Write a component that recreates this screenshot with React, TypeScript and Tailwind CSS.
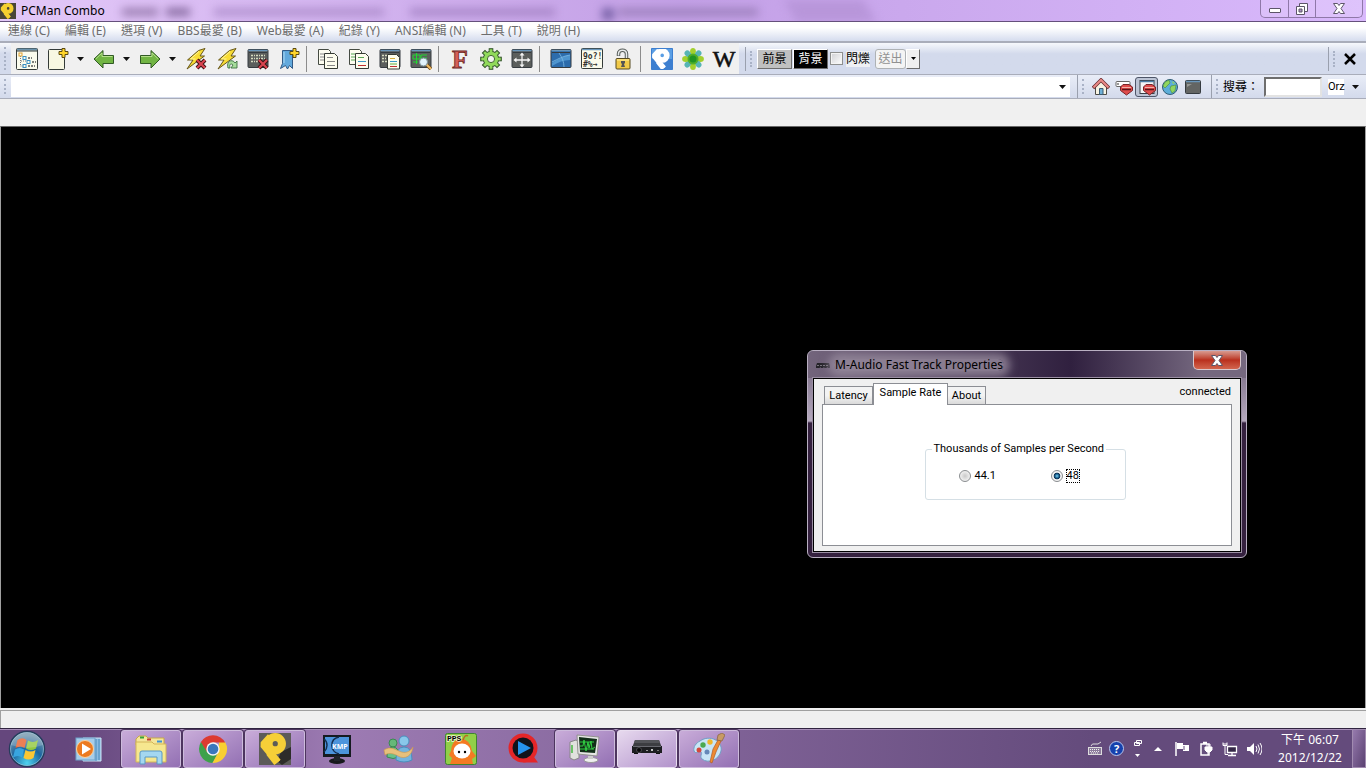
import { useState } from "react";
import type { ReactNode } from "react";

const menus = [
  "連線 (C)",
  "編輯 (E)",
  "選項 (V)",
  "BBS最愛 (B)",
  "Web最愛 (A)",
  "紀錄 (Y)",
  "ANSI編輯 (N)",
  "工具 (T)",
  "說明 (H)",
];

function Svg({ children, className = "h-[22px] w-[22px]", box = "0 0 22 22" }: { children: ReactNode; className?: string; box?: string }) {
  return (
    <svg viewBox={box} className={className} aria-hidden="true">
      {children}
    </svg>
  );
}

function Caret() {
  return (
    <svg viewBox="0 0 7 4" className="h-1 w-[7px]" aria-hidden="true">
      <path d="M0 0h7L3.5 4z" fill="#111" />
    </svg>
  );
}

function Grip() {
  return (
    <span className="flex w-[11px] shrink-0 justify-center self-stretch py-1">
      <span className="w-[3px] border-l-2 border-dotted border-[#a9b2c6]" />
    </span>
  );
}

/* thick folded ribbon: ring on top, tail to the lower right */
function RibbonLogo({ color }: { color: string }) {
  return (
    <g fill="none" stroke={color} strokeLinejoin="round">
      <circle cx="11.2" cy="7.4" r="4.6" strokeWidth="5.6" />
      <path d="M8 2.5L3 8L13 20" strokeWidth="5" strokeLinejoin="bevel" />
      <path d="M7 13.5L12.5 20.500" strokeWidth="5" />
    </g>
  );
}

/* pieces shared by several toolbar icons */
const Screen = ({ fill = "#5b5e5c" }: { fill?: string }) => (
  <g>
    <rect x="1" y="1.5" width="20" height="18" rx="1" fill={fill} stroke="#353b40" />
    <path d="M1.5 2.5h19" stroke="#6996bb" strokeWidth="1.5" />
    <path d="M2 4.5h18" stroke="#353b40" />
  </g>
);

const RedX = () => (
  <g>
    <path d="M12 12l8 8M20 12l-8 8" stroke="#3a1010" strokeWidth="4" />
    <path d="M12 12l8 8M20 12l-8 8" stroke="#d94550" strokeWidth="2.2" />
  </g>
);

const Plus = () => <path d="M15 .5h3v3h3v3h-3v3h-3v-3h-3v-3h3z" fill="#ffd52a" stroke="#5b4a10" />;

const Bolt = () => (
  <g>
    <path d="M13.500 2.500L20 .5l-5 7.500h4.500L2 21l6-9H2.500z" fill="#f8dc35" stroke="#665618" />
    <path d="M14 3.500L5.500 11h5" stroke="#fff59a" fill="none" />
  </g>
);

const TreeIcon = (
  <Svg>
    <rect x=".5" y=".5" width="21" height="21" rx="1" fill="#fbfced" stroke="#343b38" />
    <path d="M1 1.5h20" stroke="#6b93ad" strokeWidth="2" />
    <path d="M1 3h20" stroke="#343b38" />
    <path d="M4.5 8v10h3M5 13h6" stroke="#777" fill="none" strokeDasharray="1 1" />
    <rect x="3" y="5" width="3" height="3" fill="none" stroke="#e0a030" />
    <g fill="none" stroke="#3a8fc4">
      <rect x="7" y="8.5" width="3" height="3" />
      <rect x="11" y="12.5" width="3" height="3" />
      <rect x="7" y="16.5" width="3" height="3" />
    </g>
    <path d="M12 10h4M16 14h4M12 18h7" stroke="#555" strokeWidth="1.5" strokeDasharray="2 1" />
  </Svg>
);

const NewIcon = (
  <Svg>
    <rect x="1.5" y="1.5" width="16" height="20" rx="1" fill="#f8f8e2" stroke="#343b38" />
    <Plus />
  </Svg>
);

const BackIcon = (
  <Svg>
    <path d="M1 11l9-8.5v5h10.5v8H10v4.5z" fill="#72b544" stroke="#315a25" />
    <path d="M3 10.7L9 5v3.5h10.5" stroke="#b6df8c" fill="none" />
  </Svg>
);

const ForwardIcon = (
  <Svg>
    <path d="M21 11l-9-8.5v5H1.5v8H12v4.5z" fill="#72b544" stroke="#315a25" />
    <path d="M2 8.5h11V5l6 5.7" stroke="#b6df8c" fill="none" />
  </Svg>
);

const BoltXIcon = (
  <Svg>
    <Bolt />
    <RedX />
  </Svg>
);

const BoltRefreshIcon = (
  <Svg>
    <Bolt />
    <path d="M12 20c-2-8 5-9 7-5l2-2v7h-6l2-3c-2-2-4-1-3 3z" fill="#a6dd9c" stroke="#3c7040" strokeWidth=".9" />
  </Svg>
);

const TermXIcon = (
  <Svg>
    <Screen />
    <path d="M4 7.5h14M4 10.5h14M4 13.5h10" stroke="#d6dcc0" strokeWidth="1.5" strokeDasharray="2 1 1 1" />
    <RedX />
  </Svg>
);

const BookmarkIcon = (
  <Svg>
    <path d="M4.5 2.5h10v18l-3-3-2 3.5-2-3.5-5 3 2-5z" fill="#62a9dc" stroke="#315a86" />
    <path d="M6 4v11" stroke="#b0dcf5" />
    <Plus />
  </Svg>
);

function CopyIcon({ colors }: { colors: [string, string, string] }) {
  return (
    <Svg>
      <path d="M1.5 1.5h10l2 2v13h-12z" fill="#fdfdf0" stroke="#454b42" />
      <path d="M3 6h4M3 9h4M3 12h4" stroke={colors[0]} />
      <path d="M7.5 5.5h10l3 3v12h-13z" fill="#fdfdee" stroke="#353b34" />
      <path d="M10 9.5h6" stroke={colors[0]} />
      <path d="M10 13.5h8" stroke={colors[1]} />
      <path d="M10 17.5h8" stroke={colors[2]} />
    </Svg>
  );
}

const TermCopyIcon = (
  <Svg>
    <Screen />
    <path d="M3 7.5h5M3 10.5h4M3 13.5h5" stroke="#d6dcc0" strokeDasharray="2 1" strokeWidth="1.5" />
    <path d="M8.5 6.5h9l3 3v11.5h-12z" fill="#fdfdee" stroke="#353b34" />
    <path d="M11 10.5h5" stroke="#d5b040" />
    <path d="M11 13.5h7" stroke="#3d9ac8" />
    <path d="M11 16h7" stroke="#65b045" />
    <path d="M11 18.5h7" stroke="#c03030" />
  </Svg>
);

const TermFindIcon = (
  <Svg>
    <Screen />
    <path d="M3 7h7v4H3zM6.500 5v11M11 7h6M12 10h5M11 7v7M3 14h5" stroke="#20d830" fill="none" />
    <path d="M16 16l5 5" stroke="#6d4818" strokeWidth="3.500" />
    <path d="M16 16l5 5" stroke="#f1bb62" strokeWidth="2" />
    <circle cx="13.5" cy="14" r="4" fill="#e1f2fb" stroke="#80949b" />
  </Svg>
);

const FontIcon = (
  <Svg className="h-[30px] w-[22px] shrink-0" box="0 0 22 30">
    <text x="3" y="23.500" fontFamily="Liberation Serif, serif" fontWeight="700" fontSize="26" fill="#d66055" stroke="#6b2723" strokeWidth=".8">
      F
    </text>
  </Svg>
);

const GearIcon = (
  <Svg>
    {[0, 45, 90, 135, 180, 225, 270, 315].map((angle) => (
      <rect key={angle} x="9.2" y=".7" width="3.6" height="5" fill="#8bd552" stroke="#35552e" transform={`rotate(${angle} 11 11)`} />
    ))}
    <circle cx="11" cy="11" r="7.7" fill="#91da5b" stroke="#35552e" />
    {[0, 45, 90, 135, 180, 225, 270, 315].map((angle) => (
      <rect key={angle} x="9.7" y="2" width="2.6" height="3" fill="#91da5b" transform={`rotate(${angle} 11 11)`} />
    ))}
    <circle cx="11" cy="11" r="3.6" fill="#f2f4ef" stroke="#456934" />
  </Svg>
);

const MoveIcon = (
  <Svg>
    <Screen />
    <path d="M11 6v12M4 12h14" stroke="#f5f5f5" strokeWidth="1.3" />
    <path d="M11 4.500l2.500 3h-5zM11 19.500l2.500-3h-5zM2.500 12l3-2.500v5zM19.500 12l-3-2.500v5z" fill="#f5f5f5" />
  </Svg>
);

const MapIcon = (
  <Svg>
    <Screen fill="#2c6cac" />
    <path d="M2 15c6-4 12-7 18-8v5C14 12 8 14 2 18z" fill="#4e95cf" />
    <path d="M2 14c6-3 11-6 18-7M9 5c3 4 5 9 5 14" stroke="#7dbbe5" fill="none" strokeWidth=".8" />
  </Svg>
);

const SymbolIcon = (
  <Svg>
    <rect x=".5" y=".5" width="21" height="20" rx="1" fill="#fbfbec" stroke="#343b38" />
    <path d="M1 1.5h20" stroke="#6996bb" strokeWidth="1.5" />
    <text x="2" y="11" fontFamily="DejaVu Sans Mono, monospace" fontWeight="700" fontSize="8" fill="#333">
      9o?!
    </text>
    <text x="2" y="19" fontFamily="DejaVu Sans Mono, monospace" fontWeight="700" fontSize="8" fill="#333">
      #%→
    </text>
  </Svg>
);

const LockIcon = (
  <Svg>
    <path d="M6.500 8V6c0-5 8-5 8 0v5" stroke="#555b58" strokeWidth="3.500" fill="none" />
    <path d="M6.500 7.500V6c0-5 8-5 8 0v5" stroke="#e7eaea" strokeWidth="1.500" fill="none" />
    <rect x="4" y="10.5" width="14" height="10.5" rx="1" fill="#f2ca48" stroke="#574a20" />
    <path d="M5 12h12" stroke="#fff0a0" />
    <path d="M9 13h4v2l-1 1 1 3H9l1-3-1-1z" fill="#555" />
  </Svg>
);

const BlueLogoIcon = (
  <Svg>
    <rect width="22" height="22" rx="1" fill="#3d7fd0" />
    <rect x="1" y="1" width="20" height="10" fill="#5a9ee4" />
    <RibbonLogo color="#fff" />
    <rect x=".5" y=".5" width="21" height="21" rx="1" fill="none" stroke="#3d7fd0" />
  </Svg>
);

const FlowerIcon = (
  <Svg>
    {[0, 45, 90, 135, 180, 225, 270, 315].map((angle) => (
      <ellipse key={angle} cx="11" cy="3.6" rx="2.9" ry="3.500" fill={angle % 90 ? "#57b5b4" : "#a3d02e"} transform={`rotate(${angle} 11 11)`} />
    ))}
    <circle cx="11" cy="11" r="5.5" fill="#4fae2b" />
    <circle cx="11" cy="11" r="3.5" fill="#1f9424" />
  </Svg>
);

const WikiIcon = (
  <Svg className="h-7 w-6 shrink-0" box="0 0 24 28">
    <text x="12" y="22" textAnchor="middle" fontFamily="Liberation Serif, serif" fontSize="24" fill="#111" stroke="#111" strokeWidth=".6">
      W
    </text>
  </Svg>
);

type Tool = { name: string; icon?: ReactNode; drop?: boolean };

const tools: Tool[] = [
  { name: "Site list", icon: TreeIcon },
  { name: "New", icon: NewIcon, drop: true },
  { name: "Back", icon: BackIcon, drop: true },
  { name: "Forward", icon: ForwardIcon, drop: true },
  { name: "Disconnect", icon: BoltXIcon },
  { name: "Reconnect", icon: BoltRefreshIcon },
  { name: "Close page", icon: TermXIcon },
  { name: "Add bookmark", icon: BookmarkIcon },
  { name: "-" },
  { name: "Copy", icon: <CopyIcon colors={["#888", "#888", "#888"]} /> },
  { name: "Copy with color", icon: <CopyIcon colors={["#58a855", "#3d9ac8", "#c03030"]} /> },
  { name: "Copy screen", icon: TermCopyIcon },
  { name: "Find", icon: TermFindIcon },
  { name: "-" },
  { name: "Font", icon: FontIcon },
  { name: "Settings", icon: GearIcon },
  { name: "Full screen", icon: MoveIcon },
  { name: "-" },
  { name: "Background", icon: MapIcon },
  { name: "Symbols", icon: SymbolIcon },
  { name: "Lock", icon: LockIcon },
  { name: "-" },
  { name: "PCMan", icon: BlueLogoIcon },
  { name: "ICQ", icon: FlowerIcon },
  { name: "Wikipedia", icon: WikiIcon },
];

function ToolButton({ tool }: { tool: Tool }) {
  if (tool.name === "-") {
    return <span className="mr-[5px] ml-0.5 h-[26px] w-px bg-[#8c8c8c]" />;
  }
  return (
    <>
      <button aria-label={tool.name} className="flex h-7 w-[31px] items-center justify-center">
        {tool.icon}
      </button>
      {tool.drop && (
        <button aria-label={`${tool.name} menu`} className="flex h-7 w-[15px] items-center justify-center">
          <Caret />
        </button>
      )}
    </>
  );
}

function TitleBar() {
  return (
    <header className="relative flex h-[22px] shrink-0 items-center overflow-hidden border-b border-[#65507c] bg-linear-to-r from-[#e3c8f8] via-[#c3a0e6] to-[#d9b9fc]">
      <div className="absolute inset-0 blur-[4px]">
        <span className="absolute top-2 left-[122px] h-2 w-9 bg-[#8d71a4]/80" />
        <span className="absolute top-2 left-[166px] h-2 w-6 bg-[#75598f]/80" />
        <span className="absolute top-2 left-[214px] h-2 w-[170px] bg-[#9c7bbd]/60" />
        <span className="absolute top-2 left-[410px] h-2 w-[145px] bg-[#9c7bbd]/70" />
        <span className="absolute top-2 left-[602px] h-3 w-3 bg-[#665299]/80" />
        <span className="absolute top-2 left-[618px] h-2 w-[140px] bg-[#967ab5]/80" />
        <span className="absolute top-0 left-[790px] h-[22px] w-[80px] skew-x-[30deg] bg-[#b896da]" />
      </div>
      <Svg className="relative h-4 w-4">
        <rect width="22" height="22" fill="#4a4537" />
        <RibbonLogo color="#f5cf30" />
      </Svg>
      <h1 className="relative ml-[5px] text-[12px] leading-5 text-black">PCMan Combo</h1>
      <div className="relative mr-[3px] ml-auto flex h-[18px] self-start rounded-b-[5px] border border-t-0 border-[#8f78a8] bg-white/15">
        <button aria-label="Minimize" className="flex w-7 items-center justify-center border-r border-[#8f78a8]">
          <span className="mt-1 h-[5px] w-3 rounded-[1px] border border-[#5c5568] bg-white" />
        </button>
        <button aria-label="Restore" className="flex w-[27px] items-center justify-center border-r border-[#8f78a8]">
          <Svg className="h-3 w-3" box="0 0 12 12">
            <path d="M3.5.5h8v8h-8z" fill="#fff" stroke="#5c5568" />
            <path d="M.5 3.5h8v8h-8z" fill="#fff" stroke="#5c5568" />
            <path d="M3 6h3v3H3z" fill="#a991bd" stroke="#5c5568" />
          </Svg>
        </button>
        <button aria-label="Close" className="flex w-[46px] items-center justify-center">
          <CloseMark />
        </button>
      </div>
    </header>
  );
}

function CloseMark() {
  return (
    <Svg className="h-[11px] w-3" box="0 0 12 11">
      <path d="M.5.5h4L6 2.5 7.5.5h4L8 5.5l3.5 5h-4L6 8.5l-1.5 2h-4l3.5-5z" fill="#fff" stroke="#5c5568" />
    </Svg>
  );
}

function AnsiBar() {
  return (
    <div className="flex flex-1 items-center border-l border-[#9aa0ae] text-[12px] leading-4">
      <Grip />
      <button className="h-5 w-[35px] border border-t-white border-r-[#6d6d6d] border-b-[#6d6d6d] border-l-white bg-[#c0c0c0] text-black">前景</button>
      <button className="mx-px h-5 w-[35px] border border-t-white border-r-[#6d6d6d] border-b-[#6d6d6d] border-l-white bg-black text-white">背景</button>
      <label className="ml-px flex items-center gap-[3px]">
        <input type="checkbox" className="h-[13px] w-[13px] appearance-none border border-[#8e8f8f] bg-linear-to-br from-[#d0d0d4] to-white shadow-[inset_0_0_0_1px_#f4f4f4]" />
        <span className="bg-[#eff0f4]">閃爍</span>
      </label>
      <button disabled className="ml-[5px] h-5 w-[31px] rounded-[3px] border border-[#aeb2b5] bg-[#f4f4f4] text-[#919191]">
        送出
      </button>
      <button aria-label="送出選項" className="flex h-5 w-3.5 items-center justify-center border border-t-white border-r-[#6d6d6d] border-b-[#6d6d6d] border-l-white bg-[#f0f0f0]">
        <svg viewBox="0 0 5 3" className="h-[3px] w-[5px]" aria-hidden="true">
          <path d="M0 0h5L2.5 3z" />
        </svg>
      </button>
      <div className="ml-auto flex items-center self-stretch border-l border-[#9aa0ae]">
        <Grip />
        <button aria-label="Close page" className="mr-1.5 flex h-6 w-5 items-center justify-center">
          <Svg className="h-3 w-3" box="0 0 12 12">
            <path d="M1 1l10 10M11 1L1 11" stroke="#000" strokeWidth="2.5" />
          </Svg>
        </button>
      </div>
    </div>
  );
}

const Blocked = () => (
  <g>
    <path d="M5.500 9L8 6.500h6L17.500 9v3.500L11.500 17 5.500 12.500z" fill="#df4b4b" stroke="#762428" />
    <path d="M7 9.500h9" stroke="#f6b1a8" />
    <path d="M7 11.500h9" stroke="#5c1418" strokeWidth="1.500" />
  </g>
);

const webButtons = [
  {
    name: "Home",
    art: (
      <>
        <path d="M3.5 8v8.5h11V8L9 3z" fill="#f7f4e4" stroke="#4c4a45" />
        <path d="M1 10l8-8 8 8" stroke="#692c30" strokeWidth="3.5" fill="none" />
        <path d="M1.500 9.500L9 2l7.500 7.500" stroke="#ea8a86" strokeWidth="2" fill="none" />
        <path d="M7.5 10.5H11v6H7.5z" fill="#6eb0d8" stroke="#3a5b72" />
      </>
    ),
  },
  {
    name: "Block ads",
    art: (
      <>
        <rect x="1" y="3.5" width="14" height="5" rx="1" fill="#fff" stroke="#666" />
        <path d="M3 5v2" stroke="#333" />
        <Blocked />
      </>
    ),
  },
  {
    name: "Block popups",
    pressed: true,
    art: (
      <>
        <rect x="2" y="2.5" width="14" height="13" fill="#f4f5f6" stroke="#3a4148" />
        <path d="M2 3.5h14" stroke="#4c7fa5" strokeWidth="1.5" />
        <Blocked />
      </>
    ),
  },
  {
    name: "Web",
    art: (
      <>
        <circle cx="9" cy="9" r="7.5" fill="#5badd9" stroke="#315c75" />
        <path d="M4 4l4-2 1 3-3 3-2 2-2-2zM10 8l5-1-1 6-3 2-2-4z" fill="#91d65e" stroke="#4b8d3a" strokeWidth=".6" />
        <path d="M11 3l3 2-2 1z" fill="#91d65e" />
      </>
    ),
  },
  {
    name: "Terminal",
    art: (
      <>
        <rect x="1.5" y="2.5" width="15" height="13" rx="1" fill="#636563" stroke="#353b40" />
        <path d="M2 3.5h14" stroke="#6996bb" strokeWidth="1.5" />
        <path d="M3 6h5L3 9z" fill="#969896" />
      </>
    ),
  },
];

function AddressBar() {
  return (
    <div className="flex h-6 shrink-0 items-center border-b border-[#a9adba] bg-linear-to-b from-[#e9edf7] to-[#d3daec]">
      <Grip />
      <div className="flex h-5 flex-1 items-center bg-white">
        <input aria-label="Address" className="h-5 min-w-0 flex-1 bg-white px-1 text-xs outline-none" />
        <button aria-label="Address history" className="flex h-5 w-4 items-center justify-center">
          <Caret />
        </button>
      </div>
      <div className="ml-[7px] flex items-center self-stretch border-l border-[#9aa0ae]">
        <Grip />
        {webButtons.map((b) => (
          <button
            key={b.name}
            aria-label={b.name}
            className={`flex h-5 w-[23px] items-center justify-center rounded-[3px] ${b.pressed ? "border border-[#4d5568] bg-[#bcc4d5]" : ""}`}
          >
            <Svg className="h-[18px] w-[18px] shrink-0" box="0 0 18 18">
              {b.art}
            </Svg>
          </button>
        ))}
      </div>
      <div className="ml-[7px] flex items-center self-stretch border-l border-[#9aa0ae] text-[12px] leading-4">
        <Grip />
        <label htmlFor="search" className="w-[41px]">
          搜尋：
        </label>
        <input id="search" className="h-5 w-[58px] border-2 border-t-[#6e6e6e] border-r-[#e3e3e3] border-b-[#e3e3e3] border-l-[#6e6e6e] bg-white px-1 outline-none" />
        <button className="ml-1.5 flex h-4 items-center font-['Roboto',sans-serif] text-[11px]">
          <span className="w-4 bg-white">Orz</span>
          <span className="flex w-[22px] justify-center">
            <Caret />
          </span>
        </button>
      </div>
    </div>
  );
}

function PropertiesDialog() {
  const [rate, setRate] = useState("48");
  const radio =
    "h-3 w-3 appearance-none rounded-full border border-[#8a8d90] bg-[radial-gradient(circle,#c9c9c9_0%,#eeeeee_65%)] outline-none checked:bg-[radial-gradient(circle_at_center,#7fd6f0_0%,#20699a_25%,#0c3050_42%,#f4f4f4_52%)]";

  return (
    <section
      role="dialog"
      aria-labelledby="dialog-title"
      className="absolute top-[223px] left-[806px] flex h-[208px] w-[440px] flex-col rounded-md border border-[#b9afc2] bg-linear-to-b from-[#6e6079] from-0% via-[#b5a9be] via-34% to-[#35213f] to-35% px-[5px] pb-[5px] font-['Roboto','Noto_Sans_CJK_TC',sans-serif] text-[11px] leading-4"
    >
      <div className="-mx-[5px] flex h-[27px] shrink-0 items-center overflow-hidden rounded-t-md bg-linear-to-r from-[#73657c] from-0% via-[#30203f] via-60% to-[#75687f] to-90% pl-[7px]">
        <Svg className="h-4 w-4" box="0 0 16 16">
          <path d="M2 6h12l1 3v2h-2l-.5-1-1 1h-2l-.5-1-1 1H6l-.5-1-1 1H1V9z" fill="#25232a" />
          <path d="M2 8.5h12" stroke="#77737c" strokeDasharray="2 1" />
        </Svg>
        <h2
          id="dialog-title"
          className="ml-[3px] rounded-full bg-[#978b9d]/80 px-px font-['Noto_Sans',sans-serif] text-[12px] leading-3 text-black shadow-[0_0_8px_6px_#978b9dcc]"
        >
          M-Audio Fast Track Properties
        </h2>
        <button
          aria-label="Close"
          className="mr-[5px] ml-auto flex h-[19px] w-12 items-center justify-center self-start rounded-b-[5px] border border-t-0 border-[#d9c8cc] bg-linear-to-b from-[#d79a90] from-0% via-[#b92f1d] via-50% to-[#d2644d]"
        >
          <CloseMark />
        </button>
      </div>
      <div className="flex flex-1 flex-col border border-black bg-[#f0f0f0] px-2 pb-[5px] shadow-[0_0_0_1px_#9b8fa3]">
        <div className="flex h-[25px] shrink-0 items-end">
          <div role="tablist" className="ml-0.5 flex items-end">
            <button role="tab" className="h-[18px] w-[49px] border border-b-0 border-[#8c8e94] bg-linear-to-b from-[#f3f3f3] from-50% to-[#dadada]">
              Latency
            </button>
            <button role="tab" aria-selected="true" className="relative -mb-px h-[22px] w-[75px] border-x border-t border-[#8c8e94] bg-white pb-1">
              Sample Rate
            </button>
            <button role="tab" className="h-[18px] w-[38px] border border-b-0 border-l-0 border-[#8c8e94] bg-linear-to-b from-[#f3f3f3] from-50% to-[#dadada]">
              About
            </button>
          </div>
          <span className="mr-px ml-auto pb-1">connected</span>
        </div>
        <div role="tabpanel" className="flex-1 border border-[#8c8e94] bg-white pt-9 pr-1">
          <fieldset className="mx-auto h-[59px] w-[201px] rounded-[3px] border border-[#d5dfe5]">
            <legend className="ml-1.5 px-0.5">Thousands of Samples per Second</legend>
            <div className="mt-[11px] ml-[33px] flex">
              <label className="flex w-[92px] items-center gap-1">
                <input type="radio" name="rate" className={radio} checked={rate === "44.1"} onChange={() => setRate("44.1")} />
                44.1
              </label>
              <label className="flex items-center gap-[3px]">
                <input type="radio" name="rate" className={radio} checked={rate === "48"} onChange={() => setRate("48")} />
                <span className="border border-dotted border-black leading-3">48</span>
              </label>
            </div>
          </fieldset>
        </div>
      </div>
    </section>
  );
}

const apps: { name: string; open?: boolean; active?: boolean; art: ReactNode }[] = [
  {
    name: "Media Player",
    art: (
      <>
        <path d="M10 5h18v23H10z" fill="#8cbce2" stroke="#cbe4f5" />
        <path d="M26 6v21M23 6v22" stroke="#4b8cbc" />
        <rect x="3" y="5" width="19" height="22" fill="#a7cdea" stroke="#6fa2ca" />
        <circle cx="12" cy="16" r="8.5" fill="#ec7a20" stroke="#fbd2a0" />
        <path d="M9 10.5l9 5.5-9 5.5z" fill="#fff" />
      </>
    ),
  },
  {
    name: "Explorer",
    open: true,
    art: (
      <>
        <path d="M1 6l3-3h7l2 2h16v7H1z" fill="#f5e69a" stroke="#c6a947" />
        <path d="M5 3.5h4v2H5z" fill="#36a33a" />
        <path d="M12 5.5h4v2h-4z" fill="#c34034" />
        <path d="M22 7.5h5v2h-5z" fill="#3e94d2" />
        <path d="M1 9h16l2 2h12v18H1z" fill="#f6e78f" stroke="#d3b659" />
        <path d="M5 31V20q0-2 2-2h18q2 0 2 2v11h-5v-7H10v7z" fill="#a4d7f0" stroke="#5898c5" />
      </>
    ),
  },
  {
    name: "Chrome",
    open: true,
    art: (
      <>
        <path d="M3.9 9A14 14 0 0 0 15.5 30L21 20 16 16z" fill="#3da14a" />
        <path d="M28.1 9A14 14 0 0 1 15.5 30L22 18V9z" fill="#f8cf32" />
        <path d="M3.9 9L10 19l6-9.5h12.1A14 14 0 0 0 3.9 9z" fill="#dc3a30" />
        <circle cx="16" cy="16" r="6.7" fill="#f5f5f5" />
        <circle cx="16" cy="16" r="5.3" fill="#3977bd" />
      </>
    ),
  },
  {
    name: "PCMan Combo",
    open: true,
    art: (
      <>
        <rect width="32" height="32" fill="#5c5b58" />
        <path d="M22 19l10-5v12l-9 6-5-4z" fill="#2d2c2a" />
        <g transform="scale(1.45)">
          <RibbonLogo color="#f6cf38" />
        </g>
      </>
    ),
  },
  {
    name: "KMPlayer",
    art: (
      <>
        <path d="M2 2h28v22H2z" fill="#151a20" />
        <path d="M4 4h24v17H4z" fill="#4c94dc" />
        <path d="M18 4c-10 2-9 15 0 17M3 6c4 3 4 9 0 13" fill="none" stroke="#142e50" strokeWidth="1.5" />
        <ellipse cx="16" cy="28" rx="8" ry="3" fill="#17191c" />
        <path d="M13 23h6v5h-6z" fill="#20242a" />
        <text x="11" y="16" fontFamily="Open Sans, sans-serif" fontSize="7" fontWeight="700" fill="#fff">
          KMP
        </text>
      </>
    ),
  },
  {
    name: "Messenger",
    art: (
      <>
        <circle cx="10" cy="10" r="4" fill="#65b879" stroke="#398b50" />
        <path d="M4 24q0-10 6-10t6 10q-6 3-12 0z" fill="#69c18a" stroke="#398b50" />
        <circle cx="21" cy="8" r="5" fill="#89c7ea" stroke="#498fbd" />
        <path d="M13 27q0-13 8-13t8 13q-8 4-16 0z" fill="#74b4df" stroke="#498fbd" />
        <path d="M1 17c6-4 10-1 15 1 6 3 11 1 14-4-1 9-8 13-15 9-4-2-8-4-13-1z" fill="#e7c07c" stroke="#cc964b" strokeWidth=".6" />
      </>
    ),
  },
  {
    name: "PPS",
    art: (
      <>
        <rect x=".5" y=".5" width="31" height="31" rx="2" fill="#91cf48" stroke="#3e8530" />
        <path d="M5 31l2-6-3-3 2-4Q7 6 16 6t11 12l4 5-4 3 1 5z" fill="#f47a22" />
        <path d="M18 7q2-6 5-4" stroke="#bd6920" strokeWidth="1.5" fill="none" />
        <ellipse cx="17" cy="18" rx="8.5" ry="7.5" fill="#fff" />
        <circle cx="14" cy="19" r="1.200" />
        <circle cx="20" cy="19" r="1.200" />
        <text x="2" y="8" fontFamily="Liberation Mono, monospace" fontSize="8" fontWeight="700" stroke="#f4f8d0" strokeWidth="1.500" paintOrder="stroke">
          PPS
        </text>
      </>
    ),
  },
  {
    name: "QPlayer",
    art: (
      <>
        <circle cx="16" cy="15" r="14.5" fill="#e42629" />
        <path d="M16 29.5l10-7 5 7z" fill="#e42629" />
        <circle cx="16" cy="15" r="10.5" fill="#10131b" />
        <path d="M11 8l13 7-13 7z" fill="#2693ed" />
      </>
    ),
  },
  {
    name: "System Monitor",
    open: true,
    art: (
      <>
        <path d="M1 9l6-2 3 2v16l-5 2-4-2z" fill="#e1e2de" stroke="#888" />
        <path d="M3 12v8" stroke="#45b940" strokeWidth="1.5" />
        <path d="M8 2l22 2-2 19-19-2z" fill="#e5e6e4" stroke="#92938f" />
        <path d="M10 4l18 2-2 14-15-1z" fill="#112e18" />
        <path d="M11 13h3l1-6 2 11 2-9 1 6 2-7 1 8 3-2M11 9h14M11 16h14" stroke="#31d043" fill="none" />
        <ellipse cx="22" cy="27" rx="7" ry="2.5" fill="#efefef" stroke="#999" />
        <path d="M19 23h5v3h-5z" fill="#ccc" />
      </>
    ),
  },
  {
    name: "M-Audio Fast Track",
    open: true,
    active: true,
    art: (
      <>
        <path d="M4 7h24l3 8H1z" fill="#3c3d41" />
        <path d="M4 7h24l1 3H3z" fill="#54555a" />
        <path d="M1 13h30v7H1z" fill="#1d1e21" />
        <path d="M2 13.5h28" stroke="#686970" />
        <circle cx="8" cy="17" r="2.5" fill="#080808" stroke="#48484c" />
        <path d="M15 17.500h2" stroke="#999" />
        <path d="M20 17h2" stroke="#fff" strokeWidth="1.500" />
        <path d="M26 17.500h2" stroke="#777" />
        <path d="M3 20h4v1H3zM25 20h4v1h-4z" fill="#111" />
      </>
    ),
  },
  {
    name: "Paint",
    open: true,
    art: (
      <>
        <path d="M7 8C17 1 30 8 28 18c-2 9-13 13-19 8-3-3 1-5-1-7s-5 3-7-1C0 14 3 10 7 8z" fill="#c8e5f6" stroke="#719fc5" />
        <circle cx="6" cy="17" r="2.5" fill="#d5483c" />
        <circle cx="10" cy="12" r="2.7" fill="#4ba950" />
        <circle cx="17" cy="9" r="2.7" fill="#f1b62c" />
        <circle cx="14" cy="19" r="2.5" fill="#6488b8" />
        <path d="M17 29l3-13 5-9 3 1-5 11-4 11z" fill="#ed8a32" stroke="#ad5d2a" strokeWidth=".7" />
        <path d="M24 7l1-5 4-2 3 2-3 6z" fill="#c89b65" stroke="#86613c" strokeWidth=".7" />
      </>
    ),
  },
];

function StartOrb() {
  return (
    <svg viewBox="0 0 38 38" className="h-[38px] w-[38px]" aria-hidden="true">
      <defs>
        <radialGradient id="orb" cx=".5" cy=".9" r=".8">
          <stop offset="0" stopColor="#4ed2ef" />
          <stop offset=".55" stopColor="#1c659f" />
          <stop offset="1" stopColor="#7397ad" />
        </radialGradient>
      </defs>
      <circle cx="19" cy="19" r="17.5" fill="url(#orb)" stroke="#253c5c" strokeWidth="1.5" />
      <circle cx="19" cy="19" r="16.5" fill="none" stroke="#a2cbe0" strokeOpacity=".6" />
      <path d="M9.5 10q5-3.500 9 0l-2 8q-4-3-9 0z" fill="#e9602b" />
      <path d="M20 10.5q5 3 10-.5l-2 8.5q-5 3-10 0z" fill="#91c93e" />
      <path d="M7 19.5q5-3 9 0l-2 8q-4-3-9 0z" fill="#38a5df" />
      <path d="M17.5 20q5 3 10 0l-2 8q-5 3-10 0z" fill="#fbc733" />
      <path d="M3 15a16.5 16.5 0 0 1 32 0q-16 6-32 0z" fill="#fff" opacity=".2" />
    </svg>
  );
}

const trayIcons = [
  {
    name: "Power",
    art: (
      <>
        <path d="M3 3h8v11H3zM5 1.5h4" fill="#66517e" stroke="#fff" strokeWidth="1.5" />
        <path d="M7 6h7v3l-2 2H9L7 9zM9 3v3M12 3v3M10 11v3" fill="#fff" stroke="#fff" />
      </>
    ),
  },
  {
    name: "Network",
    art: (
      <>
        <path d="M5.5 5.5h9v6h-9zM10 12v2M6 14.5h8" fill="#352847" stroke="#fff" strokeWidth="1.3" />
        <path d="M1 1.5v3h4v-3M3 4.5v9h3M1 3h4" fill="none" stroke="#fff" />
      </>
    ),
  },
  {
    name: "Volume",
    art: (
      <>
        <path d="M1 6h3l4-4v12l-4-4H1z" fill="#fff" />
        <path d="M10 5q2 3 0 6M12 3.5q3 4.5 0 9M14 2q4 6 0 12" fill="none" stroke="#fff" />
      </>
    ),
  },
];

function Taskbar() {
  return (
    <footer className="flex h-10 shrink-0 items-center border-t border-[#302440] bg-linear-to-r from-[#65477d] from-5% via-[#9d7bb3] via-25% to-[#644b7c] to-80% shadow-[inset_0_1px_0_#a990ba]">
      <button aria-label="Start" className="mr-[5px] ml-2 flex h-[38px] w-[46px] items-center">
        <StartOrb />
      </button>
      <nav className="flex gap-0.5">
        {apps.map((app) => (
          <button
            key={app.name}
            aria-label={app.name}
            className={`flex h-[38px] w-[60px] items-center justify-center rounded-[3px] border ${
              app.active
                ? "border-[#e9def0] bg-linear-to-br from-[#e7d9ee] to-[#b293cb] shadow-[0_0_0_1px_#4d355f]"
                : app.open
                  ? "border-[#cdbbdc] bg-linear-to-br from-[#c9acd9] to-[#9370b3] shadow-[0_0_0_1px_#4d355f]"
                  : "border-transparent"
            }`}
          >
            <Svg className="h-8 w-8" box="0 0 32 32">
              {app.art}
            </Svg>
          </button>
        ))}
      </nav>
      <div className="ml-auto flex items-center self-stretch text-white">
        <button aria-label="Keyboard">
          <Svg className="h-4 w-4" box="0 0 16 16">
            <path d="M4 5q1-3 4-2t6-2" fill="none" stroke="#ddd" />
            <rect x="1.5" y="6.5" width="13" height="7" fill="#8b7b9b" stroke="#ddd" />
            <path d="M3 8.5h10M3 10.5h10M4 12h8" stroke="#eee" strokeDasharray="1 1" />
          </Svg>
        </button>
        <button aria-label="Help" className="ml-1.5 flex h-[15px] w-[15px] items-center justify-center rounded-full border border-[#b9c6ee] bg-[#1541ad] text-[11px] leading-3 font-bold">
          ?
        </button>
        <button aria-label="Language bar" className="ml-2">
          <Svg className="h-5 w-3" box="0 0 12 20">
            <path d="M4.5 1.5h5v3h-5zM2.5 3.5h5v3h-5z" fill="#66517e" stroke="#fff" />
            <path d="M3 15h5l-2.5 3z" fill="#fff" />
          </Svg>
        </button>
        <button aria-label="Show hidden icons" className="ml-1.5">
          <Svg className="h-4 w-4" box="0 0 16 16">
            <path d="M4 10h8L8 6z" fill="#fff" />
          </Svg>
        </button>
        <button aria-label="Action Center" className="ml-2">
          <Svg className="h-4 w-4" box="0 0 16 16">
            <path d="M2 1v14" stroke="#fff" strokeWidth="1.5" />
            <path d="M3 2h6v2h6v6H9V8H3z" fill="#fff" />
            <path d="M10 5v4" stroke="#66517e" />
          </Svg>
        </button>
        {trayIcons.map((t) => (
          <button key={t.name} aria-label={t.name} className="ml-2">
            <Svg className="h-4 w-4" box="0 0 16 16">
              {t.art}
            </Svg>
          </button>
        ))}
        <time dateTime="2012-12-22T18:07" className="ml-3.5 w-[68px] text-center text-[12px] leading-[18px]">
          下午 06:07
          <br />
          2012/12/22
        </time>
        <button aria-label="Show desktop" className="ml-2 w-3.5 self-stretch border border-[#a18bb0] bg-linear-to-br from-[#967aad] to-[#5b4272]" />
      </div>
    </footer>
  );
}

export default function App() {
  return (
    <div className="flex h-screen flex-col overflow-hidden bg-[#f0f0f0] font-['Noto_Sans','Noto_Sans_CJK_TC',sans-serif] text-black">
      <TitleBar />
      <nav className="flex h-5 shrink-0 items-center gap-[15px] border-b border-[#a9adba] bg-linear-to-b from-white from-30% to-[#d5dcee] pb-0.5 pl-2 text-[12px] leading-4 text-[#6d6d6d]">
        {menus.map((menu) => (
          <button key={menu} className="whitespace-nowrap">
            {menu}
          </button>
        ))}
      </nav>
      <div className="flex h-[33px] shrink-0 items-center border-y border-[#a9adba] bg-linear-to-b from-[#f6f8fc] to-[#d3daec] to-35%">
        <Grip />
        <div className="mr-1.5 flex items-center self-stretch bg-[#f0f0f0]">
          {tools.map((tool, i) => (
            <ToolButton key={i} tool={tool} />
          ))}
        </div>
        <AnsiBar />
      </div>
      <AddressBar />
      <div className="h-[27px] shrink-0" />
      <main className="relative min-h-0 flex-1 border-x border-t border-x-[#a0a0a0] border-t-[#696969] bg-black">
        <PropertiesDialog />
      </main>
      <div role="status" className="mt-0.5 h-[18px] shrink-0 border-t border-l border-[#a0a0a0]" />
      <Taskbar />
    </div>
  );
}
